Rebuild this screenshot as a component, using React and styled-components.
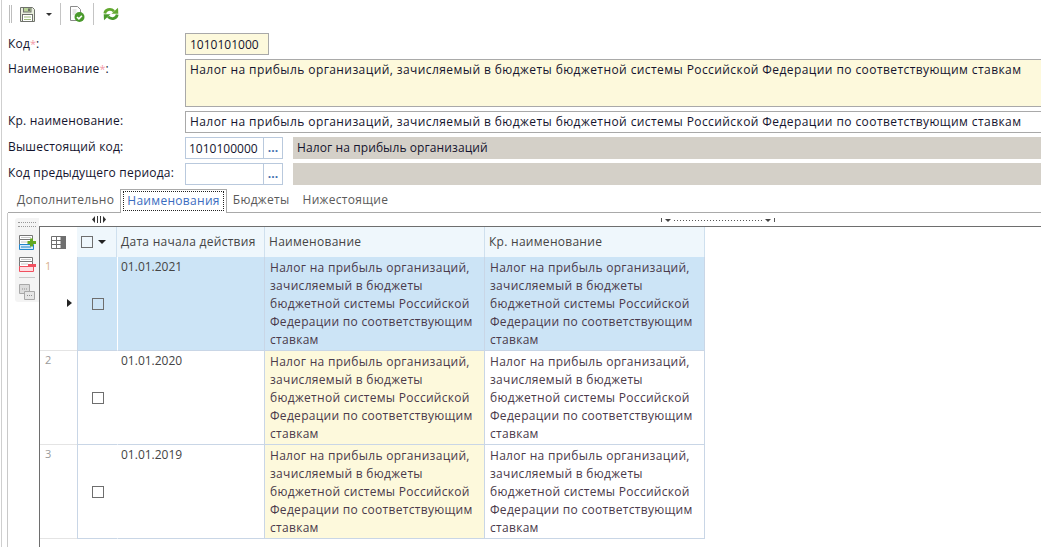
import React from 'react';
import styled, { createGlobalStyle } from 'styled-components';

const LONG_NAME = 'Налог на прибыль организаций, зачисляемый в бюджеты бюджетной системы Российской Федерации по соответствующим ставкам';

const ROWS = [
  { num: 1, date: '01.01.2021', active: true },
  { num: 2, date: '01.01.2020' },
  { num: 3, date: '01.01.2019' },
];

const TABS = ['Дополнительно', 'Наименования', 'Бюджеты', 'Нижестоящие'];

export default function App() {
  return (
    <Page>
      <GlobalStyle />
      <Toolbar>
        <Grip />
        <SaveIcon />
        <Caret />
        <ToolSep />
        <CheckDocIcon />
        <ToolSep />
        <RefreshIcon />
      </Toolbar>

      <Form>
        <FieldLabel $first>Код<Req>*</Req>:</FieldLabel>
        <CodeInput>1010101000</CodeInput>

        <FieldLabel>Наименование<Req>*</Req>:</FieldLabel>
        <TextArea>{LONG_NAME}</TextArea>

        <FieldLabel>Кр. наименование:</FieldLabel>
        <PlainInput>{LONG_NAME}</PlainInput>

        <FieldLabel>Вышестоящий код:</FieldLabel>
        <LookupRow>
          <LookupInput>1010100000</LookupInput>
          <LookupButton>...</LookupButton>
          <ReadOnlyValue>Налог на прибыль организаций</ReadOnlyValue>
        </LookupRow>

        <FieldLabel>Код предыдущего периода:</FieldLabel>
        <LookupRow>
          <LookupInput />
          <LookupButton>...</LookupButton>
          <ReadOnlyValue />
        </LookupRow>
      </Form>

      <TabBar>
        {TABS.map((tab, i) => (
          <Tab key={tab} $active={i === 1}>
            {i === 1 ? <TabFocus>{tab}</TabFocus> : tab}
          </Tab>
        ))}
      </TabBar>

      <TabPanel>
        <RulerRow>
          <ResizeMark width="14" height="7" viewBox="0 0 14 7">
            <path d="M3 0v7L0 3.500zM11 0v7l3-3.500z" fill="#333" />
            <path d="M5.500 0v7M8.500 0v7" stroke="#333" />
          </ResizeMark>
          <RangeMark>
            <RangeTick />
            <RangeArrow />
            <RangeDots />
            <RangeArrow />
            <RangeTick />
          </RangeMark>
        </RulerRow>

        <Workspace>
          <SideTools>
            <SideGrip />
            <AddRowIcon />
            <RemoveRowIcon />
            <SideSep />
            <CopyRowIcon />
          </SideTools>

          <TableArea>
            <HeaderRow>
              <HeadNum><GridIcon /></HeadNum>
              <HeadCheck>
                <CheckBox />
                <HeadArrow />
              </HeadCheck>
              <HeadCell>Дата начала действия</HeadCell>
              <HeadCell>Наименование</HeadCell>
              <HeadCell>Кр. наименование</HeadCell>
            </HeaderRow>

            {ROWS.map(row => (
              <Row key={row.num}>
                <NumCell>
                  <RowNum $active={row.active}>{row.num}</RowNum>
                  {row.active && <RowPointer />}
                </NumCell>
                <CheckCell $active={row.active}>
                  <CheckBox />
                </CheckCell>
                <DateCell $active={row.active}>{row.date}</DateCell>
                <TextCell $active={row.active} $changed={!row.active}>{LONG_NAME}</TextCell>
                <TextCell $active={row.active}>{LONG_NAME}</TextCell>
              </Row>
            ))}
          </TableArea>
        </Workspace>
      </TabPanel>
    </Page>
  );
}

function SaveIcon() {
  return (
    <IconSvg width="15" height="15" viewBox="0 0 15 15" $ml={8}>
      <path d="M.5.500h12l2 2v12H.500z" fill="#e9efdd" stroke="#6f726c" />
      <rect x="3.500" y=".5" width="7.500" height="4.500" fill="#b7d296" stroke="#6f726c" />
      <rect x="8" y="1.500" width="2" height="2.500" fill="#6f726c" />
      <rect x="2.500" y="7.500" width="10" height="7" fill="#fff" stroke="#6f726c" />
      <path d="M4 10h7M4 12.500h7" stroke="#9dbd78" />
    </IconSvg>
  );
}

function CheckDocIcon() {
  return (
    <IconSvg width="15" height="16" viewBox="0 0 15 16" $ml={9}>
      <path d="M.5.500h7l3 3v11H.500z" fill="#fff" stroke="#8b8b8b" />
      <path d="M2.500 4h4M2.500 6h4M2.500 8h3" stroke="#cfcfcf" />
      <circle cx="9.500" cy="11" r="5" fill="#4a9a2c" />
      <path d="M7 11l1.900 1.900 3-3.200" fill="none" stroke="#fff" strokeWidth="1.600" />
    </IconSvg>
  );
}

function RefreshIcon() {
  return (
    <IconSvg width="16" height="14" viewBox="0 0 16 14" $ml={9}>
      <path d="M1.800 6.500C2.300 2.800 7.200.800 11 4.200" fill="none" stroke="#62a82f" strokeWidth="2.800" />
      <path d="M8.500 6.800h6.800L15 .800z" fill="#62a82f" />
      <path d="M14.200 7.500c-.5 3.700-5.400 5.700-9.200 2.300" fill="none" stroke="#4a9a2c" strokeWidth="2.800" />
      <path d="M7.500 7.200H.700l.3 6z" fill="#4a9a2c" />
    </IconSvg>
  );
}

function GridIcon() {
  return (
    <svg width="15" height="13" viewBox="0 0 15 13">
      <path d="M.5.500h14v12H.500z" fill="#fff" stroke="#6f6f6f" />
      <rect x="10" y="0" width="5" height="13" fill="#6f6f6f" />
      <path d="M5.500 0v13M10 0v13M0 4.500h10M0 8.500h10" stroke="#6f6f6f" />
    </svg>
  );
}

function AddRowIcon() {
  return (
    <SideIcon width="17" height="15" viewBox="0 0 17 15" $mt={8}>
      <path d="M.5.500h13v4H.500z" fill="#fff" stroke="#777" />
      <path d="M.5 4.500h13v5H.500z" fill="#fff" stroke="#777" />
      <path d="M2 2.500h10M2 7h7" stroke="#c8c8c8" />
      <path d="M.5 9.500h14v5H.500z" fill="#d6ebfa" stroke="#2085cc" />
      <path d="M2 12h10" stroke="#2085cc" />
      <path d="M11 3.500v2.500H8.500v3H11v2.500h3V9h3V6h-3V3.500z" fill="#62a821" />
    </SideIcon>
  );
}

function RemoveRowIcon() {
  return (
    <SideIcon width="17" height="15" viewBox="0 0 17 15" $mt={7}>
      <path d="M.5.500h13v4H.500z" fill="#fff" stroke="#777" />
      <path d="M.5 4.500h13v5H.500z" fill="#fff" stroke="#777" />
      <path d="M2 2.500h10M2 7h7" stroke="#c8c8c8" />
      <path d="M.5 9.500h14v5H.500z" fill="#ffdce0" stroke="#f0505f" />
      <rect x="9" y="7" width="8" height="3" fill="#f0505f" />
    </SideIcon>
  );
}

function CopyRowIcon() {
  return (
    <SideIcon width="16" height="16" viewBox="0 0 16 16" $mt={6}>
      <path d="M.5.500h10v9H.500z" fill="#dcdcdc" stroke="#a8a8a8" />
      <path d="M5.500 7.500h10v8h-10z" fill="#e6e6e6" stroke="#a8a8a8" />
      <path d="M3 5h5M8 11.500h5" stroke="#8f8f8f" strokeDasharray="1 1" />
    </SideIcon>
  );
}

const FONT = '"Open Sans", "Noto Sans", sans-serif';

const GlobalStyle = createGlobalStyle`
  html, body {
    margin: 0;
    padding: 0;
    background: #fff;
    overflow: hidden;
  }
`;

const Page = styled.div`
  width: 1041px;
  height: 547px;
  overflow: hidden;
  box-sizing: border-box;
  padding-left: 1px;
  font-family: ${FONT};
  font-size: 12px;
  color: #14142e;
  display: flex;
  flex-direction: column;
  background-color: #fff;
  background-image: linear-gradient(#cfcfcf, #cfcfcf);
  background-size: 1px 100%;
  background-repeat: no-repeat;
  background-position: 1px 0;
`;

const Toolbar = styled.div`
  height: 28px;
  display: flex;
  align-items: center;
  padding-left: 8px;
  flex-shrink: 0;
`;

const Grip = styled.div`
  box-sizing: border-box;
  width: 3px;
  height: 18px;
  border-left: 1px solid #bdbdbd;
  border-right: 1px solid #bdbdbd;
`;

const IconSvg = styled.svg`
  display: block;
  margin-left: ${p => p.$ml}px;
  flex-shrink: 0;
`;

const Caret = styled.div`
  margin-left: 11px;
  width: 0;
  height: 0;
  border-left: 3px solid transparent;
  border-right: 3px solid transparent;
  border-top: 3px solid #333;
`;

const ToolSep = styled.div`
  width: 1px;
  height: 22px;
  margin-left: 8px;
  background: #c4c4c4;
`;

const Form = styled.div`
  display: grid;
  grid-template-columns: 177px 1fr;
  grid-template-rows: 22px 48px 22px 22px 22px;
  row-gap: 4px;
  margin-top: 5px;
  padding-left: 7px;
  flex-shrink: 0;
`;

const FieldLabel = styled.div`
  line-height: 18px;
  letter-spacing: 0.2px;
  margin-top: ${p => (p.$first ? '2px' : '1px')};
  white-space: nowrap;
`;

const Req = styled.span`
  font-size: 11px;
  letter-spacing: 0;
  color: #f29aa8;
`;

const CodeInput = styled.div`
  box-sizing: border-box;
  width: 84px;
  height: 22px;
  padding: 0 4px;
  line-height: 21px;
  background: #fdf9dc;
  border: 1px solid #a9a9a9;
`;

const TextArea = styled.div`
  box-sizing: border-box;
  padding: 0 4px;
  line-height: 20px;
  letter-spacing: 0.42px;
  background: #fdf9dc;
  border: 1px solid #a9a9a9;
  border-right: 0;
  white-space: nowrap;
  overflow: hidden;
`;

const PlainInput = styled(TextArea)`
  background: #fff;
`;

const LookupRow = styled.div`
  display: flex;
  height: 22px;
`;

const LookupInput = styled.div`
  box-sizing: border-box;
  width: 78px;
  padding: 0 3px;
  line-height: 21px;
  border: 1px solid #b9c9dd;
  border-right: 0;
  white-space: nowrap;
  overflow: hidden;
`;

const LookupButton = styled.div`
  box-sizing: border-box;
  width: 20px;
  text-align: center;
  line-height: 19px;
  font-weight: 700;
  color: #3f6fae;
  border: 1px solid #b9c9dd;
`;

const ReadOnlyValue = styled.div`
  flex: 1;
  margin-left: 10px;
  padding-left: 4px;
  line-height: 21px;
  letter-spacing: 0.1px;
  background: #d4d0c8;
`;

const TabBar = styled.div`
  height: 24px;
  margin-top: 4px;
  margin-left: 7px;
  display: flex;
  align-items: flex-end;
  border-bottom: 1px solid #a9a9a9;
  padding-left: 3px;
  flex-shrink: 0;
  box-sizing: border-box;
`;

const Tab = styled.div`
  box-sizing: border-box;
  height: 24px;
  margin-bottom: ${p => (p.$active ? '-1px' : '0')};
  margin-left: ${p => (p.$active ? '-1px' : '0')};
  padding: ${p => (p.$active ? '2px 3px 0' : '3px 7px 0 6px')};
  line-height: 18px;
  letter-spacing: 0.3px;
  color: ${p => (p.$active ? '#3a6cc0' : '#5a5a5a')};
  background: #fff;
  border: ${p => (p.$active ? '1px solid #a9a9a9' : '0')};
  border-bottom: 0;
`;

const TabFocus = styled.span`
  display: block;
  padding: 0 3px;
  outline: 1px dotted #222;
`;

const TabPanel = styled.div`
  flex: 1;
  margin-left: 6px;
  display: flex;
  flex-direction: column;
  border-left: 1px solid #c9c9c9;
  min-height: 0;
`;

const RulerRow = styled.div`
  height: 13px;
  position: relative;
  flex-shrink: 0;
`;

const ResizeMark = styled.svg`
  position: absolute;
  left: 84px;
  top: 3px;
`;

const RangeMark = styled.div`
  position: absolute;
  left: 653px;
  top: 5px;
  display: flex;
  align-items: center;
  gap: 3px;
`;

const RangeTick = styled.div`
  width: 1px;
  height: 4px;
  background: #555;
`;

const RangeArrow = styled.div`
  width: 0;
  height: 0;
  border-left: 3px solid transparent;
  border-right: 3px solid transparent;
  border-top: 3px solid #444;
`;

const RangeDots = styled.div`
  width: 88px;
  height: 1px;
  background: repeating-linear-gradient(to right, #555 0 1px, transparent 1px 3px);
`;

const Workspace = styled.div`
  flex: 1;
  display: flex;
  min-height: 0;
`;

const SideTools = styled.div`
  box-sizing: border-box;
  width: 24px;
  height: 84px;
  margin: -8px 0 0 7px;
  padding-top: 4px;
  display: flex;
  flex-direction: column;
  align-items: center;
  background: #f4f4f4;
  border-radius: 3px 0 0 3px;
  flex-shrink: 0;
`;

const SideGrip = styled.div`
  width: 18px;
  height: 3px;
  border-top: 1px dotted #999;
  border-bottom: 1px dotted #999;
`;

const SideIcon = styled.svg`
  display: block;
  margin-top: ${p => p.$mt}px;
  flex-shrink: 0;
`;

const SideSep = styled.div`
  width: 16px;
  height: 1px;
  margin-top: 5px;
  background: #c8c8c8;
`;

const TableArea = styled.div`
  flex: 1;
  min-width: 0;
  border-left: 1px solid #6e6e6e;
  border-top: 1px solid #6e6e6e;
`;

const COLUMNS = '37px 40px 148px 220px 220px';

const HeaderRow = styled.div`
  display: grid;
  grid-template-columns: ${COLUMNS};
  height: 30px;
`;

const HeadNum = styled.div`
  display: flex;
  align-items: center;
  justify-content: center;
`;

const HeadCheck = styled.div`
  display: flex;
  align-items: center;
  gap: 5px;
  padding-left: 4px;
  background: #eff7fc;
  border-right: 1px solid #cfe0ee;
`;

const HeadArrow = styled.div`
  width: 0;
  height: 0;
  border-left: 4px solid transparent;
  border-right: 4px solid transparent;
  border-top: 4px solid #222;
`;

const HeadCell = styled.div`
  box-sizing: border-box;
  padding: 0 4px;
  line-height: 30px;
  letter-spacing: 0.28px;
  color: #444;
  background: #eff7fc;
  border-right: 1px solid #cfe0ee;
  white-space: nowrap;
`;

const Row = styled.div`
  display: grid;
  grid-template-columns: ${COLUMNS};
  grid-template-rows: 94px;
  height: 94px;
`;

const NumCell = styled.div`
  position: relative;
  box-sizing: border-box;
  border-bottom: 1px solid #e4e4e4;
`;

const RowNum = styled.div`
  padding: 2px 0 0 5px;
  font-size: 11px;
  line-height: 14px;
  color: ${p => (p.$active ? '#d8b08c' : '#9a9a9a')};
`;

const RowPointer = styled.div`
  position: absolute;
  left: 27px;
  top: 42px;
  width: 0;
  height: 0;
  border-top: 4px solid transparent;
  border-bottom: 4px solid transparent;
  border-left: 5px solid #222;
`;

const CheckCell = styled.div`
  box-sizing: border-box;
  display: flex;
  align-items: center;
  justify-content: center;
  background: ${p => (p.$active ? '#cce4f6' : '#fff')};
  border-left: 1px solid #c9d6e6;
  border-bottom: 1px solid #c9d6e6;
`;

const CheckBox = styled.div`
  box-sizing: border-box;
  width: 12px;
  height: 12px;
  border: 1px solid #6e6e6e;
  flex-shrink: 0;
`;

const DateCell = styled.div`
  box-sizing: border-box;
  padding: 1px 3px;
  line-height: 18px;
  color: #444;
  background: ${p => (p.$active ? '#cce4f6' : '#fff')};
  border-left: 1px solid #fff;
  border-right: 1px solid #c9d6e6;
  border-bottom: 1px solid #c9d6e6;
`;

const TextCell = styled.div`
  box-sizing: border-box;
  padding: 2px 5px;
  line-height: 18px;
  letter-spacing: 0.3px;
  color: #4a3a4a;
  overflow: hidden;
  background: ${p => (p.$active ? '#cce4f6' : p.$changed ? '#fdf9dc' : '#fff')};
  border-right: 1px solid #c9d6e6;
  border-bottom: 1px solid #c9d6e6;
`;
